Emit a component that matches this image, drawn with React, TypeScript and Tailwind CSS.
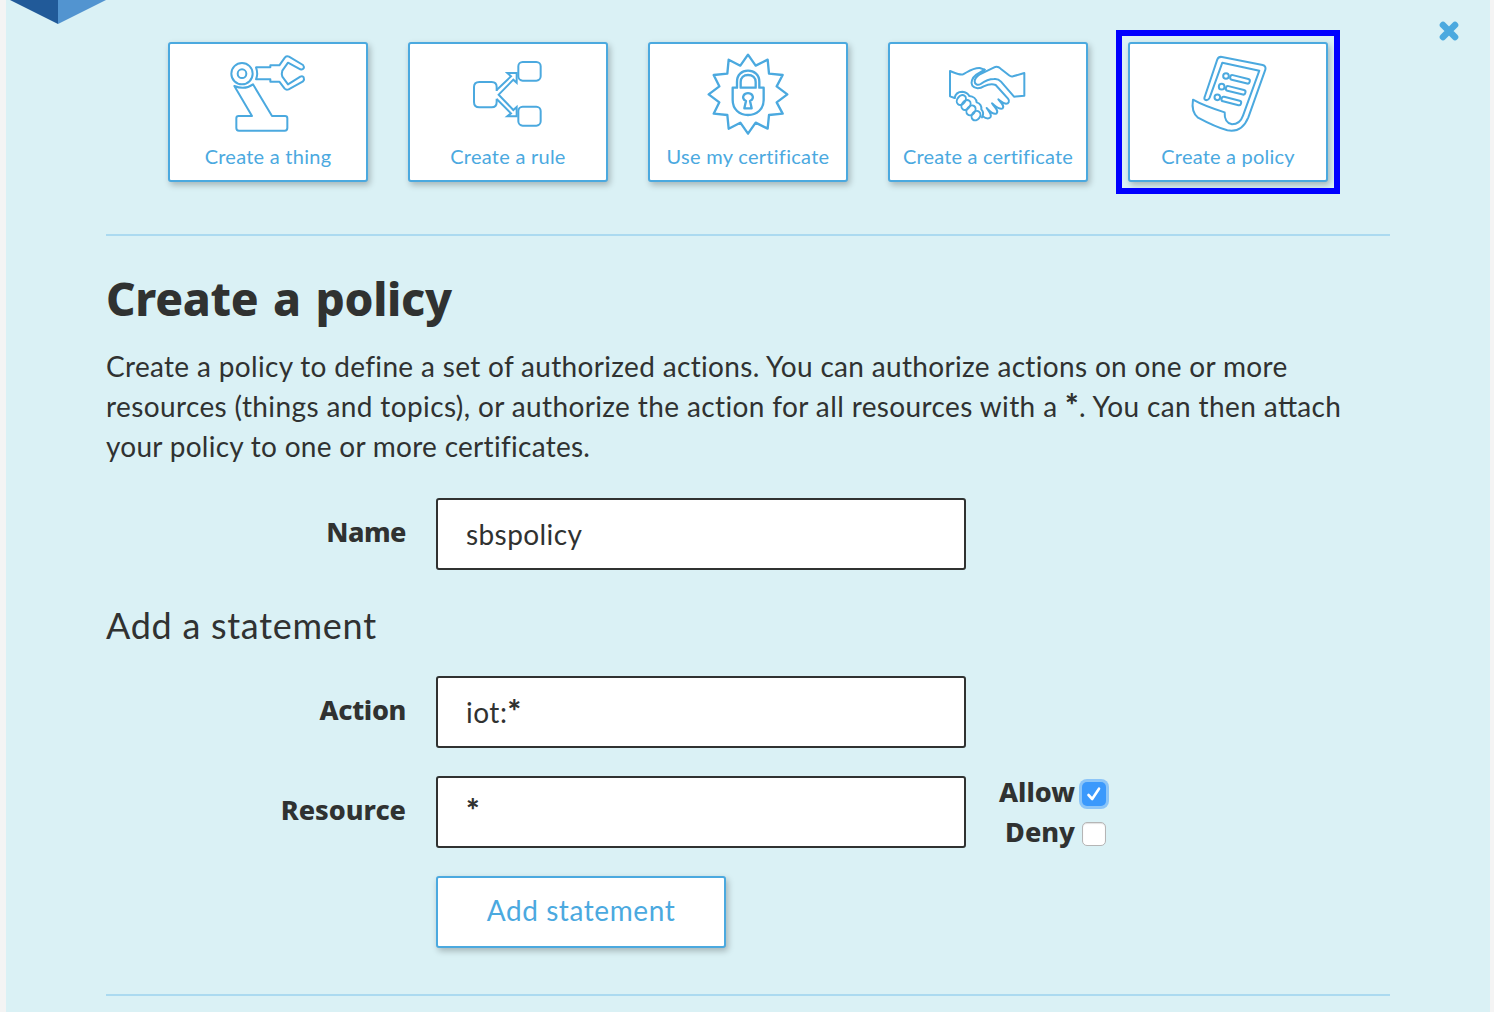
import type { ReactNode } from "react";

const iconBase = "block h-[100px] w-[196px] shrink-0 fill-none stroke-[#4ba9df] stroke-[6]";

function RobotIcon() {
  return (
    <svg className={iconBase} viewBox="30 30 588 300" strokeLinejoin="round" strokeLinecap="round">
      <circle cx="246" cy="119" r="32" />
      <circle cx="246" cy="119" r="13" />
      <path d="M288 100H331V94H358L375 70Q380 65 387 68L429 93Q433 98 431 103Q428 108 421 106L384 86L367 110Q364 119 367 128L384 151L421 128Q428 125 431 130Q434 136 429 142L386 166Q379 169 374 164L358 143H331V136H288Q295 119 288 100Z" />
      <path d="M223 156L276 246H236Q229 246 229 253V282Q229 290 237 290H374Q382 290 382 282V253Q382 246 375 246H336L279 151Q255 169 223 156Z" />
    </svg>
  );
}

function RuleIcon() {
  return (
    <svg className={iconBase} viewBox="30 30 588 300" strokeLinejoin="miter" strokeLinecap="butt">
      <path d="M290 171V159Q290 144 275 144H238Q222 144 222 159V204Q222 220 238 220H275Q290 220 290 204V194" />
      <rect x="355" y="84" width="67" height="56" rx="13" />
      <rect x="355" y="218" width="67" height="57" rx="13" />
      <path d="M290 168L333 127L322 117H350V146L340 137L296 182L340 228L350 219V247H322L333 238L290 195" />
    </svg>
  );
}

function CertificateIcon() {
  return (
    <svg className="block h-[100px] w-[196px] shrink-0 fill-none stroke-[#4ba9df] stroke-[7]" viewBox="30 30 588 300" strokeLinejoin="round" strokeLinecap="round">
      <path d="M324 62L347 95L383 77L387 119L428 123L410 157L442 181L410 205L428 239L387 243L383 284L347 266L324 299L301 266L266 284L262 243L221 239L238 205L206 181L238 157L221 123L262 119L266 77L301 95Z" />
      <path d="M278 161H291V143C291 122 305 110 324 110C343 110 358 122 358 143V161H371V198C371 226 350 243 324 243C298 243 278 226 278 198Z" />
      <path d="M302 161V144C302 131 311 123 324 123C338 123 347 131 347 144V161Z" />
      <path d="M318 201C309 197 308 190 311 184C316 175 332 175 337 184C340 190 339 197 330 201L335 223H313Z" />
    </svg>
  );
}

function HandshakeIcon() {
  return (
    <svg className={iconBase} viewBox="30 30 588 300" strokeLinejoin="round" strokeLinecap="round">
      <path d="M224 192L210 187V111C226 117 239 124 249 121C263 114 279 101 299 102L314 107L289 122C276 132 271 146 277 155C284 165 300 165 311 157C324 151 337 149 347 153L384 194C390 201 386 209 378 209C369 208 362 201 355 196C366 209 374 216 368 223C357 228 347 216 336 208C345 222 357 230 350 238C341 244 330 232 320 222C327 233 337 242 331 250C324 257 315 252 307 246" />
      <path d="M314 107L301 120M341 101C348 97 356 98 362 104L387 124Q393 129 399 127L433 117V185L402 188L363 143Q354 133 342 135C326 135 314 141 302 150C292 156 284 150 284 142C284 133 291 127 298 122L341 101" />
      <path d="M224 192C226 180 235 173 247 173C258 174 264 178 268 186C280 187 289 195 290 205C300 208 305 216 304 226C312 235 309 245 306 250" />
      <ellipse cx="244" cy="198" rx="12" ry="16" transform="rotate(38 244 198)" />
      <ellipse cx="258" cy="213" rx="12" ry="16" transform="rotate(38 258 213)" />
      <ellipse cx="273" cy="229" rx="12" ry="16" transform="rotate(38 273 229)" />
      <ellipse cx="288" cy="245" rx="12" ry="15" transform="rotate(38 288 245)" />
    </svg>
  );
}

function PolicyIcon() {
  return (
    <svg className={iconBase} viewBox="60 60 588 300" strokeLinejoin="round" strokeLinecap="round">
      <path d="M284 219L322 106Q326 97 336 99L458 123Q469 126 466 137L415 280C403 309 383 325 352 319C323 311 290 295 264 281C250 270 245 252 249 227C277 243 315 256 344 265C343 286 351 298 366 301C382 301 393 292 399 275L448 140L337 116L299 221Q295 230 287 228Q281 226 284 219Z" />
      <circle cx="348" cy="156" r="8.5" />
      <circle cx="335" cy="188" r="8.5" />
      <circle cx="322" cy="220" r="8.5" />
      <rect x="360" y="159" width="60" height="14" rx="6" transform="rotate(14 390 166)" />
      <rect x="347" y="192" width="60" height="14" rx="6" transform="rotate(14 377 199)" />
      <rect x="334" y="224" width="60" height="14" rx="6" transform="rotate(14 364 231)" />
    </svg>
  );
}

function Tile({ label, tracking, selected, children }: { label: string; tracking: string; selected?: boolean; children: ReactNode }) {
  return (
    <button className="relative flex h-[140px] w-[200px] flex-col items-center rounded-[3px] border-2 border-[#4ba9df] bg-white text-[#4ba9df] shadow-[2px_3px_6px_rgba(0,0,0,0.25)]">
      {children}
      <span className={`-mt-px text-[20px] leading-[26px] whitespace-nowrap ${tracking}`}>{label}</span>
      {selected && <span className="pointer-events-none absolute -inset-[14px] border-[6px] border-[#0000ff]" />}
    </button>
  );
}

function Field({ label, children, labelTracking }: { label: string; children: ReactNode; labelTracking: string }) {
  return (
    <div className="flex h-[72px]">
      <label className={`w-[300px] pt-[15px] text-right font-['Noto_Sans',sans-serif] text-[27px] leading-[38px] font-extrabold ${labelTracking}`}>{label}</label>
      <div className="ml-[30px] flex h-[72px] w-[530px] items-center rounded-[3px] border-2 border-[#303231] bg-white px-7 text-[28px]">
        {children}
      </div>
    </div>
  );
}

export default function App() {
  return (
    <div className="h-[1012px] w-[1494px] overflow-hidden bg-[#f4f4f4] pr-1 pl-1.5 font-[Lato,sans-serif] text-[#303231]">
      <main className="relative h-full bg-[#daf1f5] px-[100px] pt-[42px]">
        <svg className="absolute top-0 left-1 h-6 w-24" viewBox="0 0 96 24">
          <path d="M0 0H48V24Z" fill="#215a99" />
          <path d="M48 0H96L48 24Z" fill="#5294d0" />
        </svg>
        <button className="absolute top-[21px] left-[1433px]" aria-label="Close">
          <svg className="block size-5" viewBox="0 0 20 20">
            <path d="M4 4L16 16M16 4L4 16" stroke="#4ba9df" strokeWidth="6.6" strokeLinecap="round" />
          </svg>
        </button>

        <nav className="ml-[62px] flex gap-10">
          <Tile label="Create a thing" tracking="tracking-[0.25px]"><RobotIcon /></Tile>
          <Tile label="Create a rule" tracking="tracking-[0.25px]"><RuleIcon /></Tile>
          <Tile label="Use my certificate" tracking="tracking-[0.28px]"><CertificateIcon /></Tile>
          <Tile label="Create a certificate" tracking="tracking-[0.18px]"><HandshakeIcon /></Tile>
          <Tile label="Create a policy" tracking="tracking-[0.2px]" selected><PolicyIcon /></Tile>
        </nav>

        <hr className="mt-[52px] w-[1284px] border-t-2 border-[#abdaf0]" />

        <h1 className="mt-8 font-['Noto_Sans',sans-serif] text-[46px] leading-[60px] font-extrabold tracking-[-0.3px] [word-spacing:3px] whitespace-nowrap">Create a policy</h1>
        <p className="mt-[18px] text-[28px] leading-10 whitespace-nowrap">
          <span className="block tracking-[0.33px]">Create a policy to define a set of authorized actions. You can authorize actions on one or more</span>
          <span className="block tracking-[0.38px]">resources (things and topics), or authorize the action for all resources with a <b className="font-black text-[32px] leading-none">*</b>. You can then a<span className="tracking-normal">tt</span>ach</span>
          <span className="block tracking-[0.28px]">your policy to one or more certificates.</span>
        </p>

        <div className="mt-8">
          <Field label="Name" labelTracking="tracking-[-0.5px]"><span className="tracking-[0.4px]">sbspolicy</span></Field>
        </div>
        <h2 className="mt-8 text-[36px] leading-[46px] tracking-[0.72px]">Add a statement</h2>
        <div className="mt-7">
          <Field label="Action" labelTracking="tracking-[-0.35px]"><span className="tracking-[0.5px]">iot:<b className="font-black text-[32px] leading-none">*</b></span></Field>
        </div>
        <div className="mt-7 flex h-[72px]">
          <Field label="Resource" labelTracking="tracking-[0px]"><b className="pb-1 font-black text-[32px] leading-none">*</b></Field>
          <div className="ml-[30px] w-[112px] font-['Noto_Sans',sans-serif] text-[27px] leading-10 font-extrabold">
            <label className="-mt-1 flex h-10 items-center justify-end gap-[7px]">
              Allow
              <span className="mt-1 mr-[2px] flex size-6 items-center justify-center rounded-[5px] bg-[#3b99fc] shadow-[0_0_0_3px_#8cc5f8]">
                <svg className="size-[18px] fill-none stroke-white stroke-[2.6]" viewBox="0 0 18 18" strokeLinecap="round" strokeLinejoin="round">
                  <path d="M3.5 10L7.2 14L14 3.7" />
                </svg>
              </span>
            </label>
            <label className="flex h-10 items-center justify-end gap-[7px]">
              Deny
              <span className="mt-1 mr-[2px] size-6 rounded-[5px] border border-[#b5b5b5] bg-white shadow-[inset_0_1px_1px_rgba(0,0,0,0.12)]" />
            </label>
          </div>
        </div>
        <button className="mt-7 ml-[330px] block h-[72px] w-[290px] rounded-[3px] border-2 border-[#4ba9df] bg-white pb-1 text-[28px] tracking-[0.58px] text-[#4ba9df] shadow-[2px_3px_6px_rgba(0,0,0,0.25)]">Add statement</button>
        <hr className="mt-[46px] w-[1284px] border-t-2 border-[#abdaf0]" />
      </main>
    </div>
  );
}
